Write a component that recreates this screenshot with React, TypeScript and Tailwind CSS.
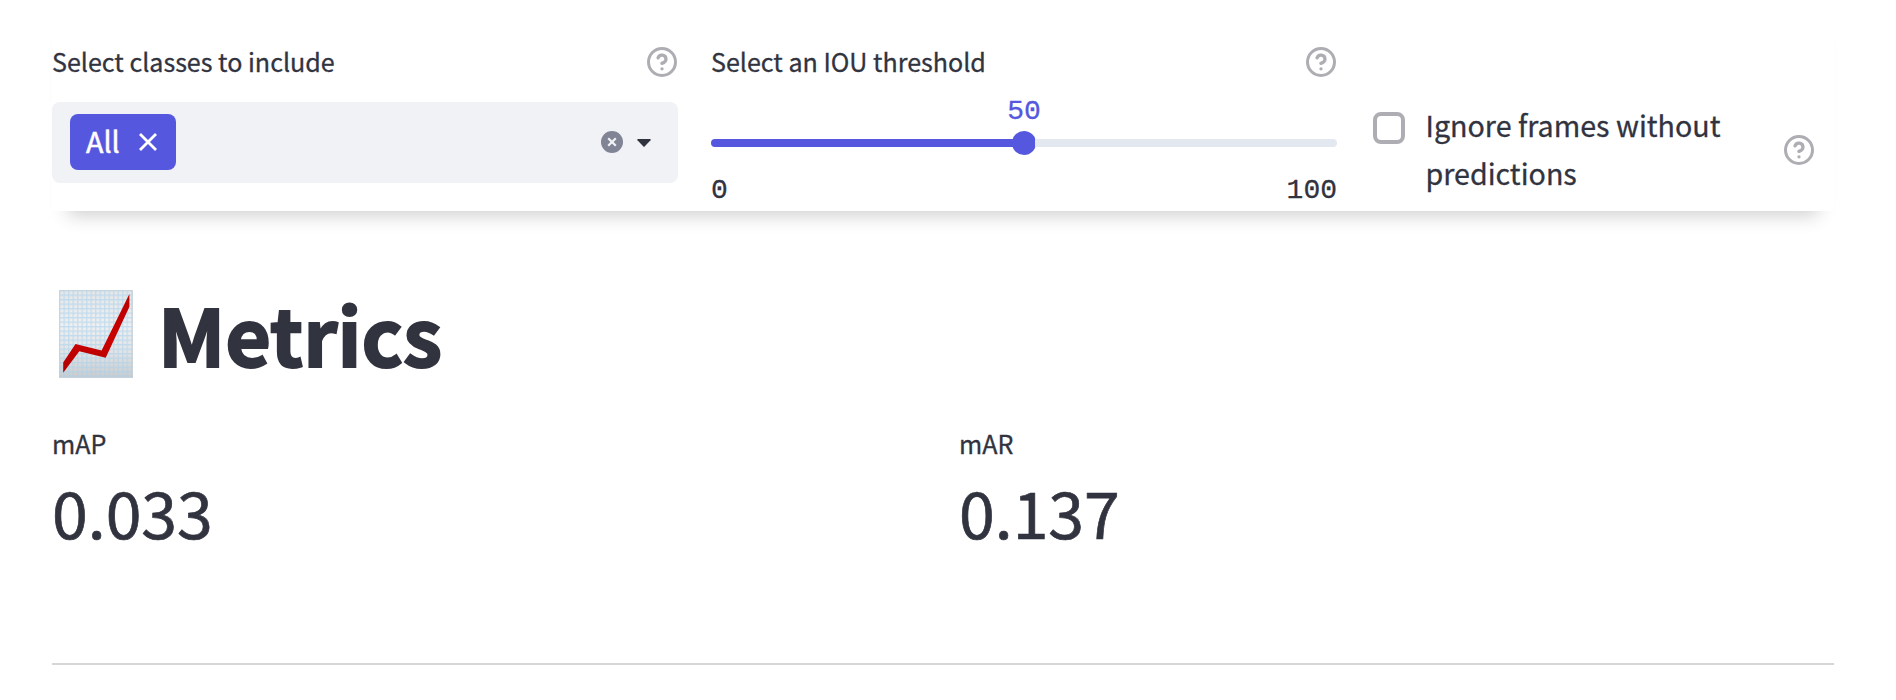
import type { ReactNode } from "react";

function HelpIcon({ className = "" }: { className?: string }) {
  return (
    <svg viewBox="1 1 22 22" className={`size-[30px] shrink-0 fill-none stroke-[#adadb3] stroke-[2.2] ${className}`} strokeLinecap="round" strokeLinejoin="round">
      <circle cx="12" cy="12" r="9.9" />
      <path strokeWidth="2.4" d="M9.09 9a3 3 0 0 1 5.83 1c0 2-3 3-3 3" />
      <path strokeWidth="2.4" d="M12 17h.01" />
    </svg>
  );
}

function Label({ children }: { children: ReactNode }) {
  return (
    <div className="flex h-[36px] items-center justify-between">
      <span className="mb-[2px] whitespace-nowrap text-[25.07px] leading-9">{children}</span>
      <HelpIcon className="mr-px" />
    </div>
  );
}

function ChartIcon() {
  return (
    <svg viewBox="0 0 74 88" className="h-[88px] w-[74px]">
      <defs>
        <linearGradient id="paper" x1="0" y1="0" x2="0" y2="1">
          <stop offset="0" stopColor="#e6e6e6" />
          <stop offset="0.4" stopColor="#f0f0f0" />
          <stop offset="0.7" stopColor="#e4e4e4" />
          <stop offset="1" stopColor="#cbcbcb" />
        </linearGradient>
        <pattern id="grid" width="4.5" height="4.5" patternUnits="userSpaceOnUse">
          <path d="M0 .7H4.5M.7 0V4.5" stroke="#a4d0f0" strokeWidth="1.2" opacity="0.6" />
        </pattern>
        <linearGradient id="trend" x1="0" y1="0" x2="0" y2="1">
          <stop offset="0" stopColor="#b80000" />
          <stop offset="0.6" stopColor="#cb0000" />
          <stop offset="1" stopColor="#ad0000" />
        </linearGradient>
      </defs>
      <rect width="74" height="88" fill="url(#paper)" />
      <rect width="74" height="88" fill="url(#grid)" />
      <rect x=".5" y=".5" width="73" height="87" fill="none" stroke="#c9d2d9" opacity="0.7" />
      <path d="M4.2 72.5 16.5 54 42.6 60.5 70.4 4V16.7L46.7 67.8 20.3 61.2 4.2 82.8Z" fill="url(#trend)" />
    </svg>
  );
}

function Metric({ label, value }: { label: string; value: string }) {
  return (
    <div className="flex flex-1 flex-col">
      <span className="text-[25.07px] leading-[40px]">{label}</span>
      <span className="text-[64.4px] leading-[96px] [-webkit-text-stroke:0.7px_#31333f]">{value}</span>
    </div>
  );
}

export default function App() {
  return (
    <main className="h-[700px] overflow-hidden bg-white pl-[52px] pr-[62px] font-['Noto_Sans_CJK_SC',sans-serif] text-[#31333f] [-webkit-text-stroke:0.3px]">
      <header className="flex h-[211px] gap-[33px] bg-white pt-[44px] shadow-[0_20px_18px_-16px_rgba(0,0,0,0.2)]">
        <section className="w-[626px]">
          <Label>Select classes to include</Label>
          <div className="mt-[22px] flex h-[81px] items-center rounded-lg bg-[#f0f2f6] pb-px pl-[18px] pr-[27px]">
            <div className="flex h-14 w-[106px] items-center rounded-lg bg-[#5558de] pl-4 text-white">
              <span className="mb-[2px] w-[53px] text-[28.65px] leading-9 [-webkit-text-stroke:0.5px]">All</span>
              <svg viewBox="0 0 18 18" className="size-[18px] fill-none stroke-white stroke-[2.8]">
                <path d="M1 1 17 17M17 1 1 17" />
              </svg>
            </div>
            <svg viewBox="0 0 22 22" className="ml-auto size-[22px]">
              <circle cx="11" cy="11" r="11" fill="#808495" />
              <path d="M7.2 7.2 14.8 14.8M14.8 7.2 7.2 14.8" stroke="#f0f2f6" strokeWidth="2.2" />
            </svg>
            <svg viewBox="0 0 14 8" className="ml-[14px] mt-px h-2 w-[14px] fill-[#31333f]">
              <path d="M.7 0H13.3Q14 .6 13.5 1.3L7.6 7.5Q7 8 6.4 7.5L.5 1.3Q0 .6.7 0Z" />
            </svg>
          </div>
        </section>

        <section className="w-[626px]">
          <Label>Select an IOU threshold</Label>
          <div className="mt-[16px] flex h-8 justify-center font-['Liberation_Mono',monospace] text-[28px] leading-8 text-[#5558de]">50</div>
          <div className="mt-[3px] flex h-6 items-center">
            <div className="h-2 flex-1 rounded-l bg-[#5558de]" />
            <div className="-mx-px size-6 shrink-0 rounded-full bg-[#5558de]" />
            <div className="h-2 flex-1 rounded-r bg-[#e3e7ef]" />
          </div>
          <div className="mt-[20px] flex justify-between font-['Liberation_Mono',monospace] text-[28px] leading-8">
            <span>0</span>
            <span>100</span>
          </div>
        </section>

        <section className="flex flex-1 pt-[57px]">
          <div className="ml-[3px] mt-[11px] size-8 shrink-0 rounded-lg border-4 border-[#adadb3]" />
          <p className="ml-[20.5px] w-[320px] text-[28.65px] leading-[48px]">
            Ignore frames without predictions
          </p>
          <HelpIcon className="ml-auto mr-[20px] mt-[34px]" />
        </section>
      </header>

      <h2 className="mt-[65px] flex h-[115px] items-start text-[78.8px] font-bold leading-[115px] [-webkit-text-stroke:2px_#31333f]">
        <span className="ml-[7px] mr-[25px] mt-[14px]"><ChartIcon /></span>
        Metrics
      </h2>

      <div className="mt-[32px] flex gap-[32px]">
        <Metric label="mAP" value="0.033" />
        <Metric label="mAR" value="0.137" />
      </div>

      <hr className="mt-[104px] border-t-2 border-[#d6d6d8]" />
    </main>
  );
}
